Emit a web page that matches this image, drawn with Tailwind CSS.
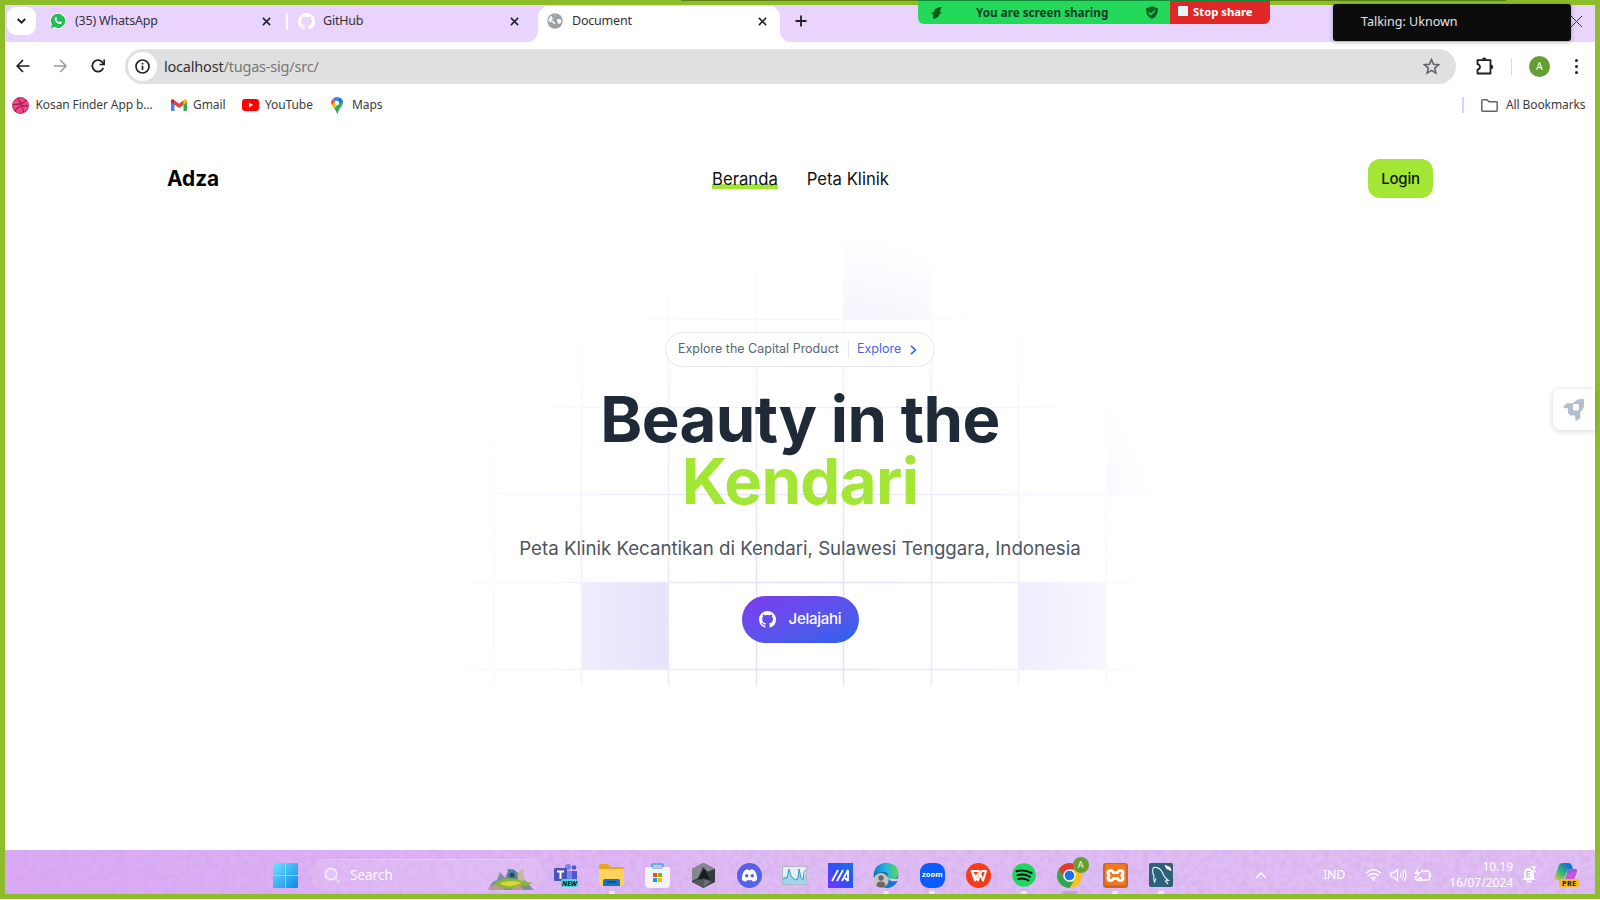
<!DOCTYPE html>
<html lang="id">
<head>
<meta charset="utf-8">
<title>Document</title>
<script src="https://cdn.jsdelivr.net/npm/@tailwindcss/browser@4"></script>
</head>
<body class="w-[1600px] h-[900px] overflow-hidden bg-white font-['Noto_Sans',sans-serif] text-[#202124]">
<svg width="0" height="0" class="absolute">
  <defs>
    <symbol id="x" viewBox="0 0 10 10"><path d="M1 1l8 8M9 1L1 9" fill="none" stroke="currentColor" stroke-width="1.7"/></symbol>
    <symbol id="gh" viewBox="0 0 16 16"><path fill="currentColor" d="M8 0C3.58 0 0 3.58 0 8c0 3.54 2.29 6.53 5.47 7.59.4.07.55-.17.55-.38 0-.19-.01-.82-.01-1.49-2.01.37-2.53-.49-2.69-.94-.09-.23-.48-.94-.82-1.13-.28-.15-.68-.52-.01-.53.63-.01 1.08.58 1.23.82.72 1.21 1.87.87 2.33.66.07-.52.28-.87.51-1.07-1.78-.2-3.64-.89-3.64-3.95 0-.87.31-1.59.82-2.15-.08-.2-.36-1.02.08-2.12 0 0 .67-.21 2.2.82.64-.18 1.32-.27 2-.27s1.36.09 2 .27c1.53-1.04 2.2-.82 2.2-.82.44 1.1.16 1.92.08 2.12.51.56.82 1.27.82 2.15 0 3.07-1.87 3.75-3.65 3.95.29.25.54.73.54 1.48 0 1.07-.01 1.93-.01 2.2 0 .21.15.46.55.38A8.01 8.01 0 0 0 16 8c0-4.42-3.58-8-8-8z"/></symbol>
  </defs>
</svg>
<div class="relative flex h-[899px] w-[1600px] flex-col border-[5px] border-[#8dbe29] bg-white">

  <!-- tab strip -->
  <div class="flex h-[37px] shrink-0 items-start bg-[#e9d4fe] text-[12.500px] leading-[32px] tracking-[-0.2px] text-[#34313a]">
    <div class="ml-[2px] mt-[2px] flex h-[28px] w-[29px] items-center justify-center rounded-[9px] bg-white">
      <svg width="9" height="6" viewBox="0 0 9 6"><path d="M.8 1l3.700 3.700L8.200 1" fill="none" stroke="#202124" stroke-width="1.900"/></svg>
    </div>
    <div class="ml-[14px] flex h-[32px] w-[221px] items-center">
      <svg class="shrink-0" width="16" height="16" viewBox="0 0 16 16"><circle cx="8" cy="8" r="8" fill="#fff"/><path d="M8 .8a7 7 0 0 0-6.100 10.600L1 15l3.700-.9A7.100 7.100 0 1 0 8 .8z" fill="#1ebf54"/><path d="M5.400 4.200c.5-.4.9-.2 1.100.3l.5 1.100c.1.300-.5.900-.6 1.100.6 1.200 1.500 2 2.700 2.500.400-.2.700-.9 1-.9l1.500.8c.4.300 0 1.300-.5 1.600-2.400 1.500-6.800-2.300-6.400-5 .1-.6.300-1.100.7-1.500z" fill="#fff"/></svg>
      <span class="ml-[9px] flex-1 whitespace-nowrap">(35) WhatsApp</span>
      <svg class="text-[#202124]" width="9" height="9"><use href="#x"/></svg>
    </div>
    <div class="ml-[15px] mt-[8px] h-[17px] w-[2px] rounded bg-white"></div>
    <div class="ml-[10px] flex h-[32px] w-[221px] items-center">
      <svg class="shrink-0 text-white" width="17" height="17"><use href="#gh"/></svg>
      <span class="ml-[8px] flex-1">GitHub</span>
      <svg class="text-[#202124]" width="9" height="9"><use href="#x"/></svg>
    </div>
    <div class="ml-[8px] flex h-full w-[11px] bg-white"><div class="h-full w-full rounded-br-[11px] bg-[#e9d4fe]"></div></div>
    <div class="mt-[1px] flex h-[36px] w-[242px] items-start rounded-t-[11px] bg-white">
      <div class="mt-[-1px] flex h-[32px] w-full items-center pl-[9px] pr-[13px]">
      <svg width="16" height="16" viewBox="0 0 16 16"><circle cx="8" cy="8" r="7.700" fill="#9aa0a6"/><path d="M8.500 1.500c.8 1.500-.5 2.500-1.800 3.300-.6.500.2 1.300-.8 1.800-.8.300-1.300-.2-1.800.4.400 1 2 .6 2.800 1.400.8.700 1.400.8 1.300 1.800-.2 1.100-1.700 1-1.700 2.400 0 .7 0 1-.3 1.400C3.300 13 1.600 11 1.500 8c0-3.500 3-6.500 7-6.500z" fill="#fff" opacity=".9"/><path d="M10.500 2.200c.2 1.800-2 2.400-.8 4 .8 1 2.300.2 3 1.500.5 1-.2 2.300 1.400 1.700.8-3.200-.8-6-3.600-7.200z" fill="#fff" opacity=".0"/><path d="M1.600 8.200l3.900 1.200L8 12l-1.300 2.300A6.500 6.500 0 0 1 1.600 8.200zM5 2.300l3.500-.8-.5 2.700-2.700 1.600z" fill="#9aa0a6"/><path d="M10 6.200q2.500-.7 4.200.8v2.500l-2.400 1.700-1.400-2.200z" fill="#fff"/></svg>
      <span class="ml-[9px] flex-1">Document</span>
      <svg class="text-[#202124]" width="9" height="9"><use href="#x"/></svg>
      </div>
    </div>
    <div class="h-full w-[11px] bg-white"><div class="h-full w-full rounded-bl-[11px] bg-[#e9d4fe]"></div></div>
    <svg class="ml-[4px] mt-[10px]" width="12" height="12" viewBox="0 0 12 12"><path d="M6 .5v11M.5 6h11" stroke="#202124" stroke-width="1.800"/></svg>
    <svg class="ml-auto mr-[12px] mt-[10px]" width="13" height="13" viewBox="0 0 13 13"><path d="M1 1l11 11M12 1L1 12" stroke="#333" stroke-width="1"/></svg>
  </div>

  <!-- toolbar -->
  <div class="flex h-[48px] shrink-0 items-center bg-white">
    <svg class="ml-[11px]" width="14" height="14" viewBox="0 0 14 14"><path d="M13.500 7H1.500M7 1L1.200 7 7 13" fill="none" stroke="#1f1f1f" stroke-width="1.700"/></svg>
    <svg class="ml-[24px]" width="13" height="14" viewBox="0 0 13 14"><path d="M0 7h12M6.200 1L12 7l-5.800 6" fill="none" stroke="#999" stroke-width="1.500"/></svg>
    <svg class="ml-[24px]" width="14" height="14" viewBox="0 0 14 14"><path d="M12.300 9A5.700 5.700 0 1 1 11.800 3.800L13 5" fill="none" stroke="#1f1f1f" stroke-width="1.800"/><path d="M13.200 .5v5H8.500" fill="none" stroke="#1f1f1f" stroke-width="1.600"/></svg>
    <div class="ml-[20px] flex h-[35px] w-[1331px] items-center rounded-full bg-[#e0e0e0] pl-[3px] pr-[16px]">
      <div class="flex size-[29px] items-center justify-center rounded-full bg-white"><svg width="15" height="15" viewBox="0 0 15 15"><circle cx="7.500" cy="7.500" r="6.500" fill="none" stroke="#222" stroke-width="1.700"/><path d="M7.500 6.800v4.200M7.500 3.800v1.700" stroke="#222" stroke-width="1.700"/></svg></div>
      <span class="ml-[7px] mt-[1px] text-[14.500px] tracking-[-0.2px] text-[#303134]">localhost<span class="text-[#777]">/tugas-sig/src/</span></span>
      <svg class="ml-auto" width="17" height="17" viewBox="0 0 17 17"><path d="M8.500 1.600l2 4.700 5.100.4-3.900 3.400 1.200 5-4.400-2.700-4.400 2.700 1.200-5L1.400 6.700l5.100-.4z" fill="none" stroke="#5f6368" stroke-width="1.600"/></svg>
    </div>
    <svg class="ml-[20px] mt-[-2px]" width="18" height="19" viewBox="0 0 18 19"><path d="M1.500 4.200H14.500V17.500H1.500V13.600Q4 12.800 4 10.900T1.500 8.200z" fill="none" stroke="#1f1f1f" stroke-width="1.800" stroke-linejoin="round"/><path d="M6 3.800a2.200 2.200 0 0 1 4.400 0zM15 8.700a2.200 2.200 0 0 1 0 4.400z" fill="#1f1f1f"/></svg>
    <div class="ml-[17px] h-[17px] w-[1px] bg-[#e4ccfb]"></div>
    <div class="ml-[17px] flex size-[21px] items-center justify-center rounded-full bg-[#659f33] text-[10px] text-white">A</div>
    <div class="ml-[25px] flex flex-col gap-[3px]"><i class="size-[3px] rounded-full bg-[#202124]"></i><i class="size-[3px] rounded-full bg-[#202124]"></i><i class="size-[3px] rounded-full bg-[#202124]"></i></div>
  </div>

  <!-- bookmarks -->
  <div class="flex h-[30px] shrink-0 items-center whitespace-nowrap pr-[10px] text-[12px] tracking-[-0.1px] text-[#3c3d40]">
    <svg class="ml-[7px]" width="17" height="17" viewBox="0 0 17 17"><circle cx="8.500" cy="8.500" r="7.900" fill="#ea4c89" stroke="#b6215c" stroke-width="1"/><path d="M1 7.500c5 .3 10-.6 13-4M5.500 1.200c3.500 4.500 5.200 9 6 14M3 14.300c2-4.500 7-7 13.300-5" fill="none" stroke="#a71c51" stroke-width="1.200"/></svg>
    <span class="ml-[6.500px] w-[117px]">Kosan Finder App b...</span>
    <svg class="ml-[18.500px]" width="16" height="12" viewBox="0 0 16 12"><path d="M0 1.500V11q0 1 1 1h2.500V5z" fill="#4285f4"/><path d="M16 1.500V11q0 1-1 1h-2.500V5z" fill="#34a853"/><path d="M12.500 1.200l1-.8q2.500-.9 2.500 1.300V3l-3.500 2.700z" fill="#fbbc04"/><path d="M3.500 1.200L8 4.700l4.500-3.500v4.500L8 9.100 3.500 5.700z" fill="#ea4335"/><path d="M0 3V1.700Q0-.5 2.500.4l1 .8v4.500z" fill="#c5221f"/></svg>
    <span class="ml-[6px] w-[33px]">Gmail</span>
    <svg class="ml-[16px]" width="17" height="12" viewBox="0 0 17 12"><rect width="17" height="12" rx="3" fill="#f00"/><path d="M7 3.500v5L11 6z" fill="#fff"/></svg>
    <span class="ml-[6px] w-[49px]">YouTube</span>
    <svg class="ml-[17px]" width="12" height="17" viewBox="0 0 12 17"><path d="M1.500 2.200L4.500 5 2 9.500C-.5 6.500-.2 4 1.500 2.200z" fill="#ea4335"/><path d="M1.500 2.200C3.500-.2 6.800-.3 8.500.6L4.500 5z" fill="#4285f4"/><path d="M8.500.6C11 1.500 12 4 12 5.500L2 10 4.500 5z" fill="#1a73e8"/><path d="M.5 7.800L4.200 4c0 2 1.700 3 3 2.300L2.800 11.200z" fill="#fbbc04"/><path d="M11.500 3.500c1.300 4-1.700 6.300-3.500 9L6.500 17C5.500 16.500 5 12.500 3 11.200z" fill="#34a853"/><circle cx="6" cy="6" r="2.200" fill="#fff"/></svg>
    <span class="ml-[9px] w-[32px]">Maps</span>
    <div class="ml-auto h-[16px] w-[2px] bg-[#e4ccfb]"></div>
    <svg class="ml-[17px]" width="17" height="13" viewBox="0 0 17 13"><path d="M.8 1.800q0-1 1-1H6L8 2.800h7.200q1 0 1 1v7.400q0 1-1 1H1.800q-1 0-1-1z" fill="none" stroke="#5f6368" stroke-width="1.500"/></svg>
    <span class="ml-[8px] w-[79px]">All Bookmarks</span>
  </div>

  <!-- page -->
  <div class="relative flex h-[730px] shrink-0 flex-col items-center font-['Inter',sans-serif]">
    <svg class="absolute left-[395px] top-[90px]" width="840" height="475" viewBox="400 210 840 475">
      <defs>
        <radialGradient id="fade" gradientUnits="userSpaceOnUse" cx="0" cy="0" r="1" gradientTransform="translate(802 620) scale(375 392)"><stop offset="0" stop-color="#fff"/><stop offset="1" stop-color="#fff" stop-opacity="0"/></radialGradient>
        <mask id="m" maskUnits="userSpaceOnUse" x="400" y="210" width="840" height="475"><rect x="400" y="210" width="840" height="475" fill="url(#fade)"/></mask>
      </defs>
      <g mask="url(#m)">
        <path d="M843.500 232h87.500v87.300h-87.500zM581.300 582.300h87.500v87h-87.500zM1018.600 582.300h87.500v87h-87.500zM1106 407.300h87.500v87.400H1106z" fill="#d9d1f9"/>
        <path d="M406 232V685M493.500 232V685M581.500 232V685M668.500 232V685M756.500 232V685M843.500 232V685M931.500 232V685M1018.500 232V685M1106.500 232V685M1193.500 232V685M400 319.500h840M400 407.500h840M400 494.500h840M400 582.500h840M400 669.500h840" stroke="#dfdafb" stroke-width="1.500"/>
      </g>
    </svg>

    <div class="relative mt-[39px] flex h-[39px] w-[1266px] items-center">
      <span class="w-[545px] text-[20.800px] font-bold text-black">Adza</span>
      <nav class="mt-[2px] flex gap-[29px] text-[16.700px] text-[#111]"><a class="underline decoration-[#a3e635] decoration-[4.500px] underline-offset-[-1px] [text-decoration-skip-ink:none]">Beranda</a><a>Peta Klinik</a></nav>
      <button class="ml-auto h-[39px] w-[65px] rounded-[12px] bg-[#a3e635] pt-[1px] text-[15px] font-medium tracking-[-0.2px] text-[#10180a]">Login</button>
    </div>

    <div class="relative mt-[134px] flex h-[35px] w-[270px] items-center rounded-full border border-[#e5e7eb] bg-white pl-[12px] text-[12.500px] text-[#5a6472]">
      <span class="w-[161px] whitespace-nowrap">Explore the Capital Product</span>
      <i class="ml-[9px] h-[17px] w-px bg-[#e5e7eb]"></i>
      <span class="ml-[8px] text-[#3f68e0]">Explore</span>
      <svg class="ml-[9px]" width="7" height="10" viewBox="0 0 7 10"><path d="M1 .8L5.500 5 1 9.200" fill="none" stroke="#2f62e6" stroke-width="1.600"/></svg>
    </div>
    <h1 class="relative mt-[21px] whitespace-nowrap text-center text-[63.500px] font-bold leading-[62px] tracking-[-0.6px] text-[#1f2937]">Beauty in the<br><span class="text-[#a3e635]">Kendari</span></h1>
    <p class="relative mt-[19px] whitespace-nowrap text-[18.650px] leading-[34px] text-[#4b5563]">Peta Klinik Kecantikan di Kendari, Sulawesi Tenggara, Indonesia</p>
    <button class="relative mt-[31px] flex h-[47px] w-[117px] items-center rounded-full bg-linear-to-br from-[#7c3aed] to-[#2563eb] pl-[17px] text-[15px] font-medium tracking-[-0.25px] text-white">
      <svg width="17" height="17"><use href="#gh"/></svg><span class="ml-[13px]">Jelajahi</span>
    </button>
    <div class="absolute right-0 top-[269px] flex h-[41px] w-[42px] items-center rounded-l-[8px] bg-white pl-[10px] shadow-[0_1px_6px_rgba(0,0,0,0.18)]">
      <svg width="22" height="22" viewBox="0 0 22 22"><path d="M0 8.500Q2 4.500 5 4.300H10L14 .8Q18-.4 21 .3v7.500Q20 11 17.300 13v5.500Q16 21.500 12.600 21.800L12 16.500H7.500L5 14V9.500z" fill="#b3bfcb"/><rect x="10" y="5" width="6" height="6.500" rx="1" fill="#fff"/></svg>
    </div>
  </div>

  <!-- taskbar -->
  <div class="relative flex h-[44px] shrink-0 items-center bg-linear-to-r from-[#dba9f6] via-[#dfbdf4] to-[#dfbff4] pt-[9px]">
    <svg class="absolute inset-0" width="1590" height="44"><filter id="n"><feTurbulence type="fractalNoise" baseFrequency="0.16" numOctaves="3" seed="4"/><feColorMatrix values="0 0 0 0 .6  0 0 0 0 .35  0 0 0 0 .75  1.600 0 0 0 -.60"/></filter><rect width="1590" height="44" filter="url(#n)" opacity=".55"/></svg>
    <svg class="relative ml-[268px] -mt-[2px]" width="25" height="25" viewBox="0 0 25 25"><linearGradient id="w" x1="0" y1="0" x2="1" y2="1"><stop stop-color="#6fe4ff"/><stop offset="1" stop-color="#0a86ea"/></linearGradient><path d="M1 0h11v12H0V1q0-1 1-1zM13 0h11q1 0 1 1v11H13zM0 13h12v12H1q-1 0-1-1zM13 13h12v11q0 1-1 1H13z" fill="url(#w)"/></svg>
    <div class="relative -mt-[3px] ml-[13px] flex h-[32px] w-[232px] items-center rounded-full border-t border-white/25 bg-white/10 pl-[13px] text-[13.500px] text-white/90">
      <svg class="shrink-0" width="17" height="17" viewBox="0 0 17 17"><circle cx="7" cy="7" r="5.700" fill="#e6cdf5" fill-opacity=".6" stroke="#f3eaf8" stroke-width="1.700"/><path d="M11.200 11.200l4.500 4.500" stroke="#e3d6ee" stroke-width="2"/></svg>
      <span class="ml-[9px]">Search</span>
      <svg class="ml-auto mr-[8px] mt-[6px] shrink-0" width="47" height="24" viewBox="0 0 47 24"><path d="M1 22q2-8 8-9l3-8 5 6q2-7 7-9l5 3q4 2 5-2l1 8 8 9 3 3H1z" fill="#7d8e9e"/><path d="M20 2l7 1 2 10-10 1z" fill="#4f7fa4"/><path d="M30 6l5-5 1 14-6 2z" fill="#c9b99c"/><path d="M8 15q15-7 26-1l11 2-9 3q-14 5-24 1L3 24z" fill="#86b832"/><path d="M12 16q13-4 22 0l-9 3q-9 1-13-3" fill="#d7d632"/><path d="M0 23q3-6 8-5t9 5zM24 23q4-7 9-3l3 3z" fill="#bb9a90"/><circle cx="24" cy="8" r="2.500" fill="#27496a"/></svg>
    </div>
    <div class="relative -mt-[3px] flex [&>div]:relative [&>div]:flex [&>div]:h-[32px] [&>div]:w-[45.800px] [&>div]:shrink-0 [&>div]:items-center [&>div]:justify-center">
      <div><svg width="24" height="24" viewBox="0 0 24 24"><circle cx="14" cy="4" r="3" fill="#7b83eb"/><circle cx="20" cy="4.500" r="2.300" fill="#5059c9"/><path d="M10 8h8v11h-8z" fill="#7b83eb"/><path d="M18 8h5v11h-5z" fill="#5059c9"/><rect x="0" y="5" width="13" height="13" rx="1" fill="#4b53bc"/><path d="M3 8.500h7M6.500 8.500V16" stroke="#fff" stroke-width="2"/><rect x="7" y="16" width="17" height="8" rx="2" fill="#3de0d6"/><text x="8" y="22.700" font-size="6.800" font-weight="800" font-style="italic" textLength="15" fill="#111">NEW</text></svg></div>
      <div><svg width="25" height="24" viewBox="0 0 25 24"><path d="M0 3q0-2 2-2h7l3 3h11q2 0 2 2v15q0 2-2 2H2q-2 0-2-2z" fill="#e9a51e"/><path d="M0 6h25v15q0 2-2 2H2q-2 0-2-2z" fill="#ffd25c"/><path d="M4 23v-5q0-2 2-2h13q2 0 2 2v5z" fill="#1673bd"/><path d="M8 19h9" stroke="#0a4a88" stroke-width="1.500"/></svg><i class="absolute -bottom-[3px] h-[3px] w-[6px] rounded-full bg-[#f1e7f7]"></i></div>
      <div><svg width="25" height="25" viewBox="0 0 25 25"><path d="M7 6V2q0-1 1-1h9q1 0 1 1v4" fill="none" stroke="#36a9e1" stroke-width="1.600"/><path d="M0 4h25v17q0 4-4 4H4q-4 0-4-4z" fill="#f5f3f5"/><path d="M7 5h11" stroke="#36a9e1" stroke-width="1"/><path d="M8 10h4v4H8z" fill="#f25022"/><path d="M13 10h4v4h-4z" fill="#7fba00"/><path d="M8 15h4v4H8z" fill="#00a4ef"/><path d="M13 15h4v4h-4z" fill="#ffb900"/></svg></div>
      <div><svg width="23" height="25" viewBox="0 0 23 25"><path d="M11.500 0L23 6v13l-11.500 6L0 19V6z" fill="#373b40"/><path d="M11.500 0L22.500 6l-7 2.500L11 4 6 15l-6 3V6z" fill="#85898e"/><path d="M12 5.500l6.500 11.500-7-2-6 2.500z" fill="#181b1f"/><path d="M0 19l6-2.500 5.500-.5v9z" fill="#55595e"/><path d="M11.500 16l8 2.500-8 6z" fill="#6a6f74"/></svg></div>
      <div><svg width="25" height="25" viewBox="0 0 25 25"><circle cx="12.500" cy="12.500" r="12.500" fill="#5562e8"/><path d="M7.500 7.500q2-1.200 3.500-1.200l.5 1h2l.5-1q1.500 0 3.500 1.200 3 4.500 2.500 9.500-2 1.500-4 1.800l-1-1.600h-5l-1 1.600q-2-.3-4-1.800-.5-5 2.500-9.500z" fill="#fff"/><circle cx="9.700" cy="12.700" r="1.700" fill="#5562e8"/><circle cx="15.300" cy="12.700" r="1.700" fill="#5562e8"/></svg></div>
      <div><svg width="25" height="19" viewBox="0 0 25 19"><rect x=".5" y=".5" width="24" height="18" fill="#e4eef3" stroke="#b4b8c4"/><path d="M1 18V11l4-1 2-7 2 7 4 3 2-1 2-9 2 8 2 2 3-7V18z" fill="#a0d6eb"/><path d="M1 13l4-1 2-9 2 7 4 4 3-1 1-10 2 9 2 2 1-8 2-2" fill="none" stroke="#3f9cc6"/></svg></div>
      <div><svg width="25" height="25" viewBox="0 0 25 25"><linearGradient id="as" x1="0" y1="1" x2="1" y2="0"><stop stop-color="#7b33ff"/><stop offset=".5" stop-color="#304ff5"/><stop offset="1" stop-color="#1372f2"/></linearGradient><path d="M0 0h25v25H0z" fill="url(#as)"/><path d="M4 18L10 7M9 18l6-11M14 18l6-11v11M17 15l3 3" fill="none" stroke="#fff" stroke-width="1.800"/></svg></div>
      <div><svg width="26" height="25" viewBox="0 0 26 25"><linearGradient id="ed"><stop stop-color="#1479cf"/><stop offset=".5" stop-color="#22b9d8"/><stop offset="1" stop-color="#5fd65c"/></linearGradient><circle cx="13" cy="12.500" r="12.300" fill="#1262ae"/><path d="M.8 11Q2.500 0 13 0q12 0 12.500 10 0 6.500-7 6.500-5 0-4-3.500 1.200-4-4-4-6 0-9.700 2z" fill="url(#ed)"/><path d="M14.500 13q-1 6 10 5Q21 25 14 25q-4-5-.5-12z" fill="#1b76ce"/><path d="M14 13q1 4.500 11 2.500v2q-9 3-11-4.500" fill="#e2cbf3"/><circle cx="8" cy="17.500" r="7.500" fill="#c9c5c1"/><circle cx="8" cy="15" r="2.700" fill="#6b6967"/><path d="M3.500 23q0-4.500 4.500-4.500t4.500 4.500q-4.500 3-9 0z" fill="#6b6967"/></svg><i class="absolute -bottom-[3px] h-[3px] w-[6px] rounded-full bg-[#f1e7f7]"></i></div>
      <div><span class="flex size-[25px] items-center justify-center rounded-[9px] bg-[#0b5cff] text-[7.500px] font-bold text-white">zoom</span><i class="absolute -bottom-[3px] h-[3px] w-[6px] rounded-full bg-[#f1e7f7]"></i></div>
      <div><svg width="25" height="25" viewBox="0 0 25 25"><circle cx="12.500" cy="12.500" r="12.500" fill="#fb3a1a"/><path d="M5.500 8h7.500l4 9.500 3-9.500h-4.500l-3.500 9.500zM5.500 8l3.500 9.500L12.500 10" fill="none" stroke="#fff" stroke-width="2" stroke-linejoin="round"/></svg></div>
      <div><svg width="24" height="24" viewBox="0 0 24 24"><circle cx="12" cy="12" r="11.800" fill="#1ed760"/><path d="M4.500 8.200q8-2 15 1.800M5.500 12.200q7-1.800 12.500 1.600M6.300 16q5.500-1.300 10.200 1.400" fill="none" stroke="#111" stroke-width="2" stroke-linecap="round"/></svg><i class="absolute -bottom-[3px] h-[3px] w-[6px] rounded-full bg-[#f1e7f7]"></i></div>
      <div><svg width="25" height="25" viewBox="0 0 25 25"><circle cx="12.500" cy="12.500" r="12.500" fill="#fbc116"/><path d="M1.700 6.200a12.500 12.500 0 0 1 21.600 0H12.500L7 15.500z" fill="#e33b2e"/><path d="M1.700 6.200L7.200 15.700l5.300 3 4 0L12.300 25A12.500 12.500 0 0 1 1.700 6.200z" fill="#2da94f"/><circle cx="12.500" cy="12.500" r="6.200" fill="#fff"/><circle cx="12.500" cy="12.500" r="4.800" fill="#1a73e8"/></svg><b class="absolute right-[4px] -top-[2px] flex size-[16px] items-center justify-center rounded-full bg-[#659f33] text-[9px] font-normal text-white">A</b><i class="absolute -bottom-[3px] h-[3px] w-[16px] rounded-full bg-[#c3a1d8]"></i></div>
      <div><svg width="25" height="25" viewBox="0 0 25 25"><rect width="25" height="25" rx="3" fill="#c9682d"/><rect x="2" y="1" width="21" height="21" rx="2" fill="#f2791f"/><path d="M8 7.500q1.500 0 2.500 2h4q1-2 2.500-2 3 0 3 2.500 0 2-2 2.500 2 .5 2 2.500 0 2.500-3 2.500-1.500 0-2.500-2h-4q-1 2-2.500 2-3 0-3-2.500 0-2 2-2.500-2-.5-2-2.500 0-2.500 3-2.500z" fill="none" stroke="#fff" stroke-width="3"/></svg><i class="absolute -bottom-[3px] h-[3px] w-[6px] rounded-full bg-[#f1e7f7]"></i></div>
      <div><svg width="24" height="24" viewBox="0 0 24 24"><rect width="24" height="24" rx="2" fill="#2d6079"/><path d="M7 15.500l-1.500 3.500Q4 16 5 13 2.500 8 4.500 4.500q6-.5 9 5 1.500 5 6 8l-3 .5 2.500 3" fill="none" stroke="#dceaf0" stroke-width="1.200"/><path d="M16 2.500l2 3 4 2-1-3zM17 6l2-1.500" fill="#fff" stroke="#fff" stroke-width="1"/></svg><i class="absolute -bottom-[3px] h-[3px] w-[6px] rounded-full bg-[#f1e7f7]"></i></div>
    </div>
    <svg class="relative ml-[71px] -mt-[3px]" width="12" height="7" viewBox="0 0 12 7"><path d="M1 6l5-5 5 5" fill="none" stroke="#fff" stroke-width="1.500"/></svg>
    <span class="relative -mt-[2px] ml-[56px] w-[22px] text-[12.500px] tracking-[-0.3px] text-white">IND</span>
    <svg class="relative ml-[20px] -mt-[4px]" width="17" height="13" viewBox="0 0 17 13"><path d="M1 5.200q7.500-7 15 0M3.500 7.800q5-4.500 10 0M6 10.200q2.500-2 5 0" fill="none" stroke="#fff" stroke-width="1.300"/><circle cx="8.500" cy="11.500" r="1.300" fill="#fff"/></svg>
    <svg class="relative ml-[8px] -mt-[4px]" width="17" height="14" viewBox="0 0 17 14"><path d="M.8 5h2.700L7.500 1.500v11L3.500 9H.8zM10 4.500q1.800 2.500 0 5M12 2.700q3 4.300 0 8.600M14 1q4 6 0 12" fill="none" stroke="#fff" stroke-width="1.200"/></svg>
    <svg class="relative ml-[7px] -mt-[4px]" width="18" height="14" viewBox="0 0 18 14"><path d="M7 3h7q1.500 0 1.500 1.500v6Q15.500 12 14 12H3q-1.500 0-1.500-1.500V8M16.500 6v3" fill="none" stroke="#fff" stroke-width="1.400"/><path d="M4 0L0 6h3L2 10l5-6H4z" fill="#fff"/><path d="M4 9h4v2H4z" fill="#fff"/></svg>
    <div class="relative -mt-[3px] ml-[15px] w-[66px] text-right text-[12px] leading-[16.500px] text-white"><div>10.19</div><div>16/07/2024</div></div>
    <svg class="relative ml-[9px] -mt-[4px]" width="15" height="17" viewBox="0 0 15 17"><path d="M2 12V7q0-4.500 4.500-5H8l4 5.500V12l1.500 2H.5z" fill="#fff"/><path d="M4.500 15.500h5" stroke="#fff" stroke-width="1.800"/><path d="M8.500 5.500H5v5.500h3.500M5 8.300h3" fill="none" stroke="#caa3e0" stroke-width="1.100"/><path d="M9.500 1h4l-3.500 4.500h4" fill="none" stroke="#fff" stroke-width="1.300"/></svg>
    <svg class="relative ml-[17px] -mt-[3px]" width="26" height="26" viewBox="0 0 26 26"><linearGradient id="cp" x1="0" y1="1" x2="1" y2="0"><stop stop-color="#e6c82b"/><stop offset=".4" stop-color="#38b870"/><stop offset=".8" stop-color="#1474d4"/></linearGradient><path d="M1 14L5 3q1-2 3-2h7q2 0 3 3l1 3h-5l-4 9q-1 2-3 2H3q-3 0-2-4z" fill="url(#cp)"/><path d="M14 7h7q3 0 2 3l-3 8q-1 2-3 2h-7z" fill="#c85ccf"/><path d="M14 7h7q2 0 2 2l-4 1-6 3z" fill="#8e62e8"/><rect x="5" y="17" width="20" height="8" rx="2" fill="#f6b91d"/><text x="8" y="23.700" font-size="7" font-weight="800" textLength="14" fill="#222">PRE</text></svg>
  </div>

  <!-- screen share overlays -->
  <div class="absolute -top-[5px] left-[676px] h-px w-[825px] bg-[#5d8212]"></div>
  <div class="absolute -top-[5px] left-[913px] flex h-[24px] w-[352px] items-center overflow-hidden rounded-b-[6px] border-t border-[#138a37] bg-[#23d959] text-[11.700px] font-bold text-[#153c2b]">
    <svg class="ml-[13px]" width="12" height="12" viewBox="0 0 12 12"><path d="M11 0Q4 0 2.500 5L0 6l2 1.500L2 12q6-1 6.500-5L11 6 9 5q0-3 2-5z" fill="#075c18"/></svg>
    <span class="ml-[33px] w-[132px] whitespace-nowrap">You are screen sharing</span>
    <svg class="ml-[38px] mr-auto" width="12" height="13" viewBox="0 0 12 13"><path d="M6 0q3 2 6 2 .5 8-6 11Q-.5 10 0 2q3 0 6-2z" fill="#0a661f"/><path d="M3 6.500l2 2 4-4" fill="none" stroke="#23d959" stroke-width="1.400"/></svg>
    <div class="flex h-full w-[100px] items-center bg-[#e02828] pl-[8px] text-[11.300px] text-white"><i class="-mt-[4px] size-[10px] rounded-[1px] bg-[#e5f7fb]"></i><span class="ml-[5px] whitespace-nowrap">Stop share</span></div>
  </div>
  <div class="absolute -top-[1px] left-[1328px] flex h-[37px] w-[238px] items-center rounded-[3px] bg-[#0c0c0c] pl-[28px] text-[12.500px] text-[#e3e3e3] shadow-[0_1px_5px_rgba(0,0,0,0.3)]">Talking: Uknown</div>
</div>
</body>
</html>
